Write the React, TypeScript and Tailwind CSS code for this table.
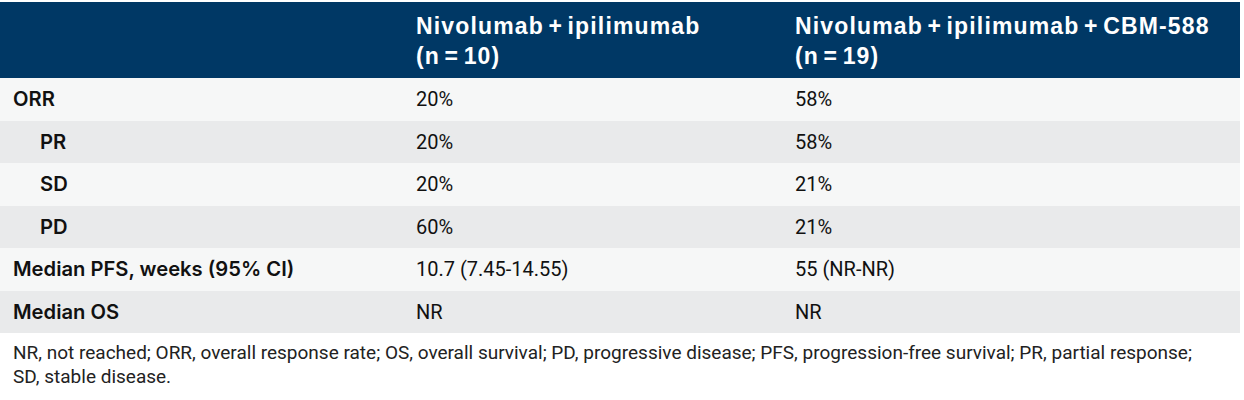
import React from "react";

type Row = { label: string; a: string; b: string; indent?: boolean };

const rows: Row[] = [
  { label: "ORR", a: "20%", b: "58%" },
  { label: "PR", a: "20%", b: "58%", indent: true },
  { label: "SD", a: "20%", b: "21%", indent: true },
  { label: "PD", a: "60%", b: "21%", indent: true },
  { label: "Median PFS, weeks (95% CI)", a: "10.7 (7.45-14.55)", b: "55 (NR-NR)" },
  { label: "Median OS", a: "NR", b: "NR" },
];

export default function App() {
  return (
    <div className="w-[1244px] h-[400px] bg-white pt-[2px]">
      <div className="w-[1240px]">
        <div className="grid grid-cols-[403px_379px_1fr] bg-[#003865] h-[76px] text-white font-bold text-[23px] leading-[30px] tracking-[0.05em] [word-spacing:-3px] [font-family:'Liberation_Sans',Arial,sans-serif]">
          <div />
          <div className="pl-[13px] pt-[9px]">
            Nivolumab + ipilimumab
            <br />
            (n = 10)
          </div>
          <div className="pl-[13px] pt-[9px]">
            Nivolumab + ipilimumab + CBM-588
            <br />
            (n = 19)
          </div>
        </div>
        {rows.map((r, i) => (
          <div
            key={i}
            className={
              "grid grid-cols-[403px_379px_1fr] items-center h-[42.5px] text-[#111] " +
              (i % 2 === 0 ? "bg-[#f6f7f7]" : "bg-[#e9eaeb]")
            }
          >
            <div
              className={
                "font-semibold text-[20.2px] [font-family:Inter,sans-serif] " +
                (r.indent ? "pl-[40px]" : "pl-[13px]")
              }
            >
              {r.label}
            </div>
            <div className="pl-[13px] text-[20px] [font-family:Roboto,sans-serif]">{r.a}</div>
            <div className="pl-[13px] text-[20px] [font-family:Roboto,sans-serif]">{r.b}</div>
          </div>
        ))}
      </div>
      <div className="pl-[13px] pt-[8px] text-[19px] leading-[23.5px] text-[#222] [font-family:Roboto,sans-serif]">
        NR, not reached; ORR, overall response rate; OS, overall survival; PD, progressive disease; PFS,
        progression-free survival; PR, partial response;
        <br />
        SD, stable disease.
      </div>
    </div>
  );
}
